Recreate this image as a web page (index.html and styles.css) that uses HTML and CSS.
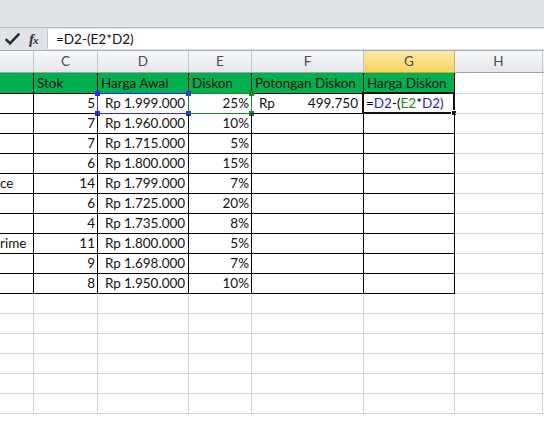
FILE: index.html
```html
<!DOCTYPE html>
<html>
<head>
<meta charset="utf-8">
<link rel="stylesheet" href="styles.css">
</head>
<body>
<div class="app">
  <div class="ribbon"></div>
  <div class="fbar">
    <div class="fbar-tools">
      <svg class="check" width="15" height="13" viewBox="0 0 15 13"><path d="M1.5 7 L5 10.5 L13.5 1.5" fill="none" stroke="#2e2e2e" stroke-width="2.6" stroke-linecap="square"/></svg>
      <span class="fx"><i>f</i><small>x</small></span>
    </div>
    <div class="fbar-input">=D2-(E2*D2)</div>
  </div>
  <div class="sheet">
    <div class="r hdr">
      <div class="c"></div><div class="c">C</div><div class="c">D</div><div class="c">E</div><div class="c">F</div><div class="c sel">G</div><div class="c">H</div><div class="c"></div>
    </div>
    <div class="r r1">
      <div class="c t g"></div><div class="c t g">Stok</div><div class="c t g">Harga Awal</div><div class="c t g">Diskon</div><div class="c t g">Potongan Diskon</div><div class="c t g">Harga Diskon</div><div class="c"></div><div class="c"></div>
    </div>
    <div class="r">
      <div class="c t"></div><div class="c t n">5</div>
      <div class="c t rp refb"><span>Rp</span><span>1.999.000</span><b class="box blue"><i class="q tl"></i><i class="q tr"></i><i class="q bl"></i><i class="q br"></i></b></div>
      <div class="c t n refg">25%<b class="box green"><i class="q tr"></i><i class="q br"></i></b></div>
      <div class="c t rp"><span>Rp</span><span>499.750</span></div>
      <div class="c t act"><span class="k">=</span><span class="bl2">D2</span><span class="k">-(</span><span class="gr2">E2</span><span class="k">*</span><span class="bl2">D2</span><span class="pr">)</span><b class="box black"><i class="fh"></i></b></div>
      <div class="c"></div><div class="c"></div>
    </div>
    <div class="r"><div class="c t"></div><div class="c t n">7</div><div class="c t rp"><span>Rp</span><span>1.960.000</span></div><div class="c t n">10%</div><div class="c t"></div><div class="c t"></div><div class="c"></div><div class="c"></div></div>
    <div class="r"><div class="c t"></div><div class="c t n">7</div><div class="c t rp"><span>Rp</span><span>1.715.000</span></div><div class="c t n">5%</div><div class="c t"></div><div class="c t"></div><div class="c"></div><div class="c"></div></div>
    <div class="r"><div class="c t"></div><div class="c t n">6</div><div class="c t rp"><span>Rp</span><span>1.800.000</span></div><div class="c t n">15%</div><div class="c t"></div><div class="c t"></div><div class="c"></div><div class="c"></div></div>
    <div class="r"><div class="c t b">ce</div><div class="c t n">14</div><div class="c t rp"><span>Rp</span><span>1.799.000</span></div><div class="c t n">7%</div><div class="c t"></div><div class="c t"></div><div class="c"></div><div class="c"></div></div>
    <div class="r"><div class="c t"></div><div class="c t n">6</div><div class="c t rp"><span>Rp</span><span>1.725.000</span></div><div class="c t n">20%</div><div class="c t"></div><div class="c t"></div><div class="c"></div><div class="c"></div></div>
    <div class="r"><div class="c t"></div><div class="c t n">4</div><div class="c t rp"><span>Rp</span><span>1.735.000</span></div><div class="c t n">8%</div><div class="c t"></div><div class="c t"></div><div class="c"></div><div class="c"></div></div>
    <div class="r"><div class="c t b">rime</div><div class="c t n">11</div><div class="c t rp"><span>Rp</span><span>1.800.000</span></div><div class="c t n">5%</div><div class="c t"></div><div class="c t"></div><div class="c"></div><div class="c"></div></div>
    <div class="r"><div class="c t"></div><div class="c t n">9</div><div class="c t rp"><span>Rp</span><span>1.698.000</span></div><div class="c t n">7%</div><div class="c t"></div><div class="c t"></div><div class="c"></div><div class="c"></div></div>
    <div class="r"><div class="c t"></div><div class="c t n">8</div><div class="c t rp"><span>Rp</span><span>1.950.000</span></div><div class="c t n">10%</div><div class="c t"></div><div class="c t"></div><div class="c"></div><div class="c"></div></div>
    <div class="r"><div class="c"></div><div class="c"></div><div class="c"></div><div class="c"></div><div class="c"></div><div class="c"></div><div class="c"></div><div class="c"></div></div>
    <div class="r"><div class="c"></div><div class="c"></div><div class="c"></div><div class="c"></div><div class="c"></div><div class="c"></div><div class="c"></div><div class="c"></div></div>
    <div class="r"><div class="c"></div><div class="c"></div><div class="c"></div><div class="c"></div><div class="c"></div><div class="c"></div><div class="c"></div><div class="c"></div></div>
    <div class="r"><div class="c"></div><div class="c"></div><div class="c"></div><div class="c"></div><div class="c"></div><div class="c"></div><div class="c"></div><div class="c"></div></div>
    <div class="r"><div class="c"></div><div class="c"></div><div class="c"></div><div class="c"></div><div class="c"></div><div class="c"></div><div class="c"></div><div class="c"></div></div>
    <div class="r"><div class="c"></div><div class="c"></div><div class="c"></div><div class="c"></div><div class="c"></div><div class="c"></div><div class="c"></div><div class="c"></div></div>
  </div>
</div>
</body>
</html>
```

FILE: styles.css
```css
* { box-sizing: border-box; margin: 0; padding: 0; }
html, body { width: 544px; height: 425px; overflow: hidden; background: #fff; }
body { font-family: Lato, "Liberation Sans", sans-serif; font-size: 13.5px; color: #111; }

.app { width: 544px; height: 425px; overflow: hidden; display: flex; flex-direction: column; }

.ribbon { height: 28px; flex: none; background: #dfe2e7; border-bottom: 1px solid #b4b8be; }

.fbar { height: 23px; flex: none; display: flex; background: #dfe2e7; padding-top: 1px; border-bottom: 1px solid #a9adb3; }
.fbar-tools { width: 47px; display: flex; align-items: center; gap: 9px; padding-left: 5px; }
.check { display: block; }
.fx { font-family: "Liberation Serif", serif; font-size: 15px; color: #333; font-weight: bold; letter-spacing: -1px; }
.fx small { font-size: 11px; font-style: italic; }
.fbar-input { flex: 1; background: #fff; height: 20px; line-height: 20px; padding-left: 8px; font-size: 13.5px; border-left: 1px solid #c4c8ce; }

.sheet { flex: 1; display: flex; flex-direction: column; }
.r { display: grid; grid-template-columns: 34px 64px 91px 63px 112px 91px 88px 1px; height: 20px; flex: none; }
.c { position: relative; border-right: 1px solid #d4d4d4; border-bottom: 1px solid #d4d4d4; line-height: 19px; padding: 0 3px; white-space: nowrap; overflow: visible; }

.hdr { height: 22px; }
.hdr .c { background: linear-gradient(#f7f8f9, #e4e6ea); border-right-color: #c3c7cc; border-bottom-color: #9ea3aa; text-align: center; color: #4c4c4c; line-height: 21px; font-size: 13.5px; }
.hdr .c.sel { background: linear-gradient(#fdeaa6, #f8d35f); border-right-color: #c9b06a; border-bottom-color: #c9a53e; }

.r1 { height: 21px; }
.r1 .c { line-height: 20px; }

.t { border-right-color: #000; border-bottom-color: #000; }
.g { background: #00b050; color: #101010; }
.n { text-align: right; padding-right: 2px; }
.rp { display: flex; justify-content: space-between; gap: 3px; padding: 0 5px 0 7px; }
.b { padding-left: 0; overflow: hidden; }
.act { padding-left: 2px; }
.k { color: #000; }
.bl2 { color: #2222dd; }
.gr2 { color: #1f8a1f; }
.pr { color: #302070; }

.box { position: absolute; top: -1px; left: -1px; right: -1px; bottom: -1px; border: 1px solid; pointer-events: none; }
.box.blue { border-color: #2a2af0; }
.box.green { border-color: #178a17; }
.box.black { border: 2px solid #111; top: -2px; left: -2px; }
.q { position: absolute; width: 5px; height: 5px; }
.blue .q { background: #2a2af0; }
.green .q { background: #178a17; }
.tl { top: -3px; left: -3px; }
.tr { top: -3px; right: -3px; }
.bl { bottom: -3px; left: -3px; }
.br { bottom: -3px; right: -3px; }
.fh { position: absolute; width: 6px; height: 6px; right: -4px; bottom: -4px; background: #111; border: 1px solid #fff; }
```
